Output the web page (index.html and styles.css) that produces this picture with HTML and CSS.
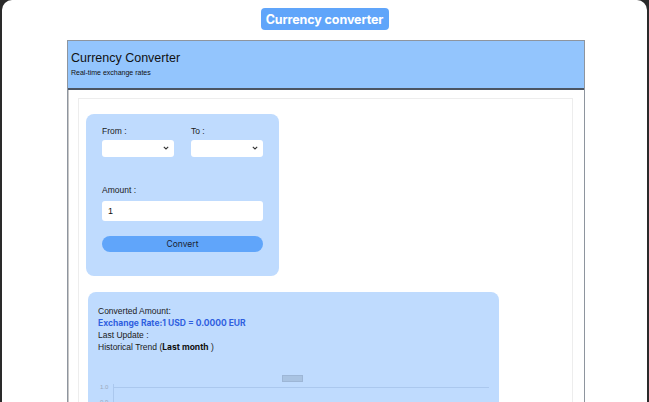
FILE: index.html
```html
<!DOCTYPE html>
<html lang="en">
<head>
<meta charset="utf-8">
<title>Currency converter</title>
<link rel="stylesheet" href="styles.css">
</head>
<body>
<div class="window">
  <div class="top">
    <button class="title-btn">Currency converter</button>
  </div>
  <div class="app">
    <header class="app-header">
      <h1>Currency Converter</h1>
      <p>Real-time exchange rates</p>
    </header>
    <main class="app-body">
      <div class="inner">
        <form class="form-card">
          <div class="pair">
            <div class="field">
              <label>From :</label>
              <div class="select-wrap">
                <select class="sel"></select>
                <svg class="chev" width="6" height="4" viewBox="0 0 6 4"><path d="M0.8 0.8 L3 3 L5.2 0.8" fill="none" stroke="#333" stroke-width="1.1"/></svg>
              </div>
            </div>
            <div class="field">
              <label>To :</label>
              <div class="select-wrap">
                <select class="sel"></select>
                <svg class="chev" width="6" height="4" viewBox="0 0 6 4"><path d="M0.8 0.8 L3 3 L5.2 0.8" fill="none" stroke="#333" stroke-width="1.1"/></svg>
              </div>
            </div>
          </div>
          <label class="amount-label">Amount :</label>
          <input class="amount" type="text" value="1">
          <button type="button" class="convert">Convert</button>
        </form>
        <section class="result-card">
          <p>Converted Amount:</p>
          <p class="rate">Exchange Rate:1 USD = 0.0000 EUR</p>
          <p>Last Update :</p>
          <p>Historical Trend (<b>Last month</b> )</p>
          <div class="chart">
            <div class="legend"></div>
            <div class="plot">
              <div class="row"><span class="tick">1.0</span><span class="grid"></span></div>
              <div class="row"><span class="tick">0.9</span><span class="grid"></span></div>
            </div>
          </div>
        </section>
      </div>
    </main>
  </div>
</div>
</body>
</html>
```

FILE: styles.css
```css
* { box-sizing: border-box; }
html, body { margin: 0; padding: 0; }
body {
  background: #2a2a2a;
  font-family: "Liberation Sans", Arial, sans-serif;
  color: #111;
  height: 402px;
  overflow: hidden;
}
.window {
  margin: 0 2px 0 2px;
  background: #fff;
  border-radius: 10px 10px 0 0;
  height: 402px;
  overflow: hidden;
}
.top {
  display: flex;
  justify-content: center;
  padding-top: 8px;
  padding-bottom: 10px;
}
.title-btn {
  height: 22px;
  width: 128px;
  padding: 0;
  border: none;
  border-radius: 4px;
  background: #60a5fa;
  color: #fff;
  font-family: Inter, "Liberation Sans", sans-serif;
  font-weight: 700;
  font-size: 12.5px;
  letter-spacing: -0.1px;
}
.app {
  margin-left: 65px;
  width: 518px;
  border: 1px solid #8e959e;
  border-bottom: none;
  min-height: 400px;
}
.app-header {
  background: #93c5fd;
  height: 49px;
  border-bottom: 2px solid #4b5563;
  padding: 10px 3px 0;
}
.app-header h1 {
  margin: 0;
  font-weight: 400;
  font-size: 12.5px;
  line-height: 15px;
  color: #111;
}
.app-header p {
  margin: 2px 0 0;
  font-size: 7px;
  line-height: 9px;
}
.app-body {
  padding: 8px 11px 0 9px;
  border-left: 1px solid #c8c8c8;
}
.inner {
  border: 1px solid #ededed;
  border-bottom: none;
  padding: 15px 8px 0 7px;
  min-height: 320px;
}
.form-card {
  width: 193px;
  height: 162px;
  background: #bfdbfe;
  border-radius: 8px;
  padding: 12px 16px 0 16px;
  display: flex;
  flex-direction: column;
  margin: 0;
}
.pair {
  display: grid;
  grid-template-columns: 72px 72px;
  column-gap: 17px;
}
.field { display: flex; flex-direction: column; }
label {
  font-size: 8.5px;
  line-height: 11px;
  color: #1a1a1a;
}
.select-wrap {
  position: relative;
  margin-top: 2px;
  height: 17px;
}
.sel {
  appearance: none;
  -webkit-appearance: none;
  width: 100%;
  height: 17px;
  border: none;
  border-radius: 3px;
  background: #fff;
  margin: 0;
}
.chev {
  position: absolute;
  right: 5px;
  top: 7px;
}
.amount-label {
  margin-top: 29px;
}
.amount {
  margin-top: 5px;
  height: 20px;
  width: 100%;
  border: none;
  border-radius: 3px;
  background: #fff;
  padding: 0 6px;
  font-family: "Liberation Sans", Arial, sans-serif;
  font-size: 9px;
  color: #111;
}
.convert {
  margin-top: 15px;
  height: 16px;
  width: 100%;
  border: none;
  border-radius: 8px;
  background: #60a5fa;
  font-family: Inter, "Liberation Sans", sans-serif;
  font-size: 8.5px;
  color: #1a2230;
  padding: 0;
}
.result-card {
  margin: 16px 0 0 2px;
  width: 411px;
  min-height: 140px;
  background: #bfdbfe;
  border-radius: 8px;
  padding: 13px 10px 0 10px;
}
.result-card p {
  margin: 0;
  font-size: 8.5px;
  line-height: 12px;
  color: #1a1a1a;
}
.result-card b { font-family: Inter, "Liberation Sans", sans-serif; font-weight: 700; color: #111; }
.result-card .rate {
  font-family: Inter, "Liberation Sans", sans-serif;
  font-weight: 700;
  color: #2f5fe0;
}
.chart {
  margin-top: 22px;
  display: flex;
  flex-direction: column;
}
.legend {
  align-self: center;
  width: 21px;
  height: 7px;
  background: #a9c3e2;
  border: 1px solid #9db6d6;
  margin-left: -3px;
}
.plot {
  margin-top: 2px;
  display: flex;
  flex-direction: column;
  border-left: 1px solid #abc8ee;
  margin-left: 15px;
  width: 376px;
}
.row {
  height: 15px;
  display: flex;
  align-items: flex-start;
}
.tick {
  font-size: 6px;
  line-height: 6px;
  color: #9aa9bd;
  margin-left: -14px;
  width: 14px;
}
.grid {
  flex: 1;
  height: 1px;
  margin-top: 3px;
  background: #abc8ee;
}
```
